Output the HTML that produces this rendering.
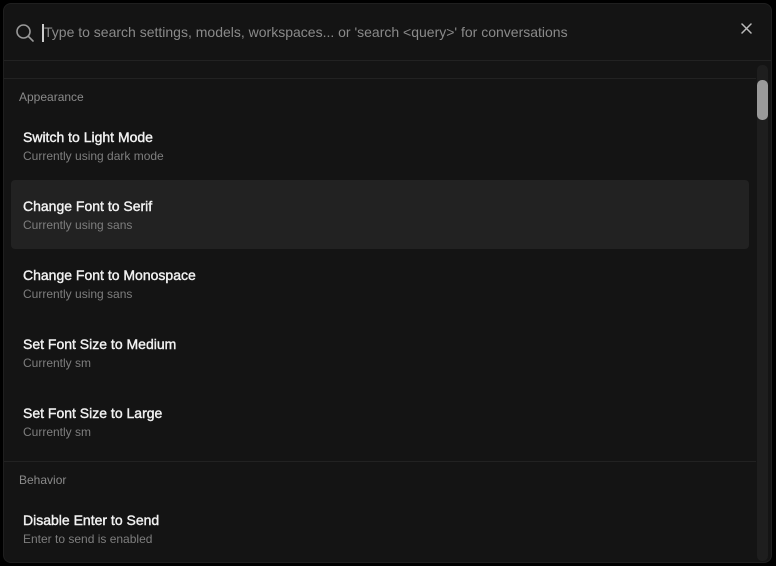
<!DOCTYPE html>
<html><head><style>
*{margin:0;padding:0;box-sizing:border-box}
body{width:776px;height:566px;background:#000;font-family:"Liberation Sans",sans-serif;position:relative;overflow:hidden}
.dlg{position:absolute;left:3px;top:3px;width:769px;height:560px;background:#141414;border-radius:8px;border:1px solid #1f1f1f;overflow:hidden}
.abs{position:absolute}
.ph{left:44px;top:24px;font-size:14px;color:#8a8a8a;white-space:nowrap}
.caret{left:42px;top:24px;width:1.5px;height:18px;background:#ccc}
.line{height:1px;background:#222}
.sec{font-size:12px;color:#8a8a8a;left:19px}
.t{font-size:14px;color:#f2f2f2;left:23px;font-weight:500;-webkit-text-stroke:0.4px #f2f2f2}
.s{font-size:12px;color:#7e7e7e;left:23px}
.hl{left:11px;top:180px;width:738px;height:69px;background:#222;border-radius:4px}
</style></head><body>
<div class="dlg"></div>
<svg class="abs" style="left:15px;top:23px" width="20" height="20" viewBox="0 0 20 20"><circle cx="8.5" cy="8.5" r="6.5" fill="none" stroke="#9a9a9a" stroke-width="1.6"/><line x1="13.3" y1="13.3" x2="18" y2="18" stroke="#9a9a9a" stroke-width="1.6" stroke-linecap="round"/></svg>
<div class="abs caret"></div>
<div class="abs ph">Type to search settings, models, workspaces... or 'search &lt;query&gt;' for conversations</div>
<svg class="abs" style="left:741px;top:23px" width="11" height="11" viewBox="0 0 11 11"><path d="M1 1L10 10M10 1L1 10" stroke="#bbb" stroke-width="1.5" stroke-linecap="round"/></svg>
<div class="abs line" style="left:4px;top:60px;width:767px"></div>
<div class="abs line" style="left:4px;top:78px;width:752px"></div>
<div class="abs" style="left:757px;top:65px;width:11px;height:496px;background:#1e1e1e;border-radius:5px"></div>
<div class="abs" style="left:757px;top:80px;width:11px;height:40px;background:#9a9a9a;border-radius:5px"></div>
<div class="abs sec" style="top:90px">Appearance</div>
<div class="abs hl"></div>
<div class="abs t" style="top:129px">Switch to Light Mode</div>
<div class="abs s" style="top:149px">Currently using dark mode</div>
<div class="abs t" style="top:198px">Change Font to Serif</div>
<div class="abs s" style="top:218px">Currently using sans</div>
<div class="abs t" style="top:267px">Change Font to Monospace</div>
<div class="abs s" style="top:287px">Currently using sans</div>
<div class="abs t" style="top:336px">Set Font Size to Medium</div>
<div class="abs s" style="top:356px">Currently sm</div>
<div class="abs t" style="top:405px">Set Font Size to Large</div>
<div class="abs s" style="top:425px">Currently sm</div>
<div class="abs line" style="left:4px;top:461px;width:752px"></div>
<div class="abs sec" style="top:473px">Behavior</div>
<div class="abs t" style="top:512px">Disable Enter to Send</div>
<div class="abs s" style="top:532px">Enter to send is enabled</div>
</body></html>
